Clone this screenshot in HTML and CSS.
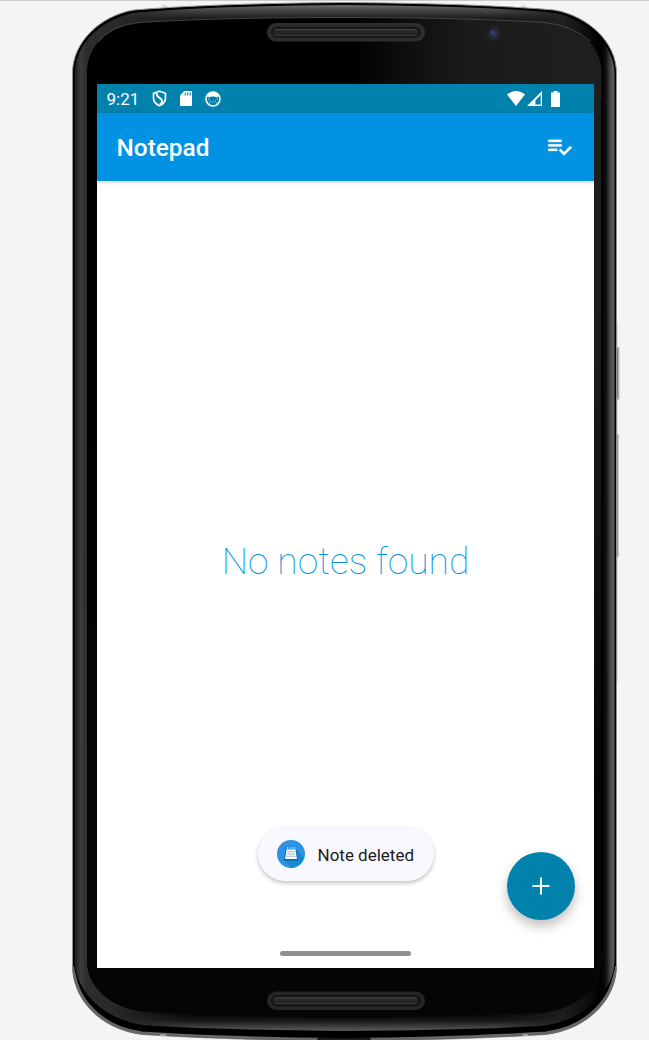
FILE: index.html
```html
<!DOCTYPE html>
<html lang="en">
<head>
<meta charset="utf-8">
<title>Notepad</title>
<link rel="stylesheet" href="styles.css">
</head>
<body>
<main class="stage">
  <svg class="device" viewBox="0 0 649 1040" aria-hidden="true">
    <defs>
      <linearGradient id="side" gradientUnits="userSpaceOnUse" x1="72" y1="0" x2="617" y2="0">
        <stop offset="0" stop-color="#111"/><stop offset=".007" stop-color="#222"/><stop offset=".016" stop-color="#3c3c3c"/><stop offset=".027" stop-color="#2c2c2c"/>
        <stop offset=".1" stop-color="#2a2a2a"/><stop offset=".9" stop-color="#222"/>
        <stop offset=".972" stop-color="#000"/><stop offset=".98" stop-color="#111"/><stop offset=".988" stop-color="#484848"/><stop offset=".995" stop-color="#606060"/>
      </linearGradient>
      <linearGradient id="topEdge" gradientUnits="userSpaceOnUse" x1="0" y1="4" x2="0" y2="19">
        <stop offset="0" stop-color="#707070"/><stop offset=".45" stop-color="#444"/><stop offset="1" stop-color="#191919"/>
      </linearGradient>
      <linearGradient id="bottomEdge" gradientUnits="userSpaceOnUse" x1="0" y1="1014" x2="0" y2="1030">
        <stop offset="0" stop-color="#060606"/><stop offset=".4" stop-color="#161616"/><stop offset="1" stop-color="#555"/>
      </linearGradient>
      <linearGradient id="fadeX" x1="0" x2="1" y1="0" y2="0">
        <stop offset=".07" stop-color="#000"/><stop offset=".22" stop-color="#fff"/><stop offset=".78" stop-color="#fff"/><stop offset=".93" stop-color="#000"/>
      </linearGradient>
      <mask id="middle"><rect x="72" width="545" height="1040" fill="url(#fadeX)"/></mask>
      <linearGradient id="glass" gradientUnits="userSpaceOnUse" x1="350" y1="0" x2="560" y2="0">
        <stop offset="0" stop-color="#1d1d1d" stop-opacity="0"/><stop offset=".55" stop-color="#1a1a1a"/><stop offset="1" stop-color="#1e1e1e"/>
      </linearGradient>
      <linearGradient id="glassFade" gradientUnits="userSpaceOnUse" x1="0" y1="300" x2="0" y2="1000">
        <stop offset="0" stop-color="#050505" stop-opacity="0"/><stop offset=".7" stop-color="#050505"/>
      </linearGradient>
      <linearGradient id="bar" x1="0" x2="0" y1="0" y2="1">
        <stop offset="0" stop-color="#555"/><stop offset=".2" stop-color="#292929"/><stop offset=".75" stop-color="#222"/><stop offset="1" stop-color="#444"/>
      </linearGradient>
      <radialGradient id="lens"><stop offset="0" stop-color="#343c60"/><stop offset=".5" stop-color="#25293e"/><stop offset=".75" stop-color="#202024"/><stop offset="1" stop-color="#1d1d1d"/></radialGradient>
      <path id="shell" d="M72.500 73C72.500 43 99 16 134 10Q210 3.500 344 2.500Q478 3.500 554 10C589 16 616.500 43 616.500 73V966C616.500 998 589 1029 546 1034.500Q460 1040 344 1041Q228 1040 142 1034.500C99 1029 72.500 998 72.500 966Z"/>
      <path id="body" d="M74 74C74 45 100 19 134 12.500Q210 6 344 5Q478 6 554 12.500C588 19 615 45 615 74V960C615 991 586 1021 543 1026Q460 1030 344 1031Q228 1030 145 1025.500C102 1021 74 989 74 960Z"/>
      <path id="face" d="M87 72C87 46 108 25 140 22.500Q220 17.500 344 17.500Q468 17.500 544 22.500C578 25 601.500 46 601.500 72V959C601.500 988 576 1010 540 1013Q450 1017 344 1018Q238 1017 147 1012C111 1009 87 987 87 961Z"/>
      <clipPath id="inShell"><use href="#shell"/></clipPath>
    </defs>
    <rect width="649" height="1" fill="#cacaca"/>
    <rect x="616" y="322" width="1.500" height="360" fill="#c4c4c4"/>
    <rect x="615" y="347" width="4.500" height="53" rx="1" fill="#b5b5b5"/><rect x="615" y="348" width="3" height="50" fill="#777"/>
    <rect x="615" y="434" width="3.500" height="123" rx="1" fill="#999"/><rect x="615" y="436" width="2" height="119" fill="#686868"/>
    <use href="#shell" fill="#000" stroke="#939393"/>
    <g clip-path="url(#inShell)">
      <path d="M72.500 966C72.500 998 99 1029 142 1034.500Q228 1040 344 1041Q460 1040 546 1034.500C589 1029 616.500 998 616.500 966" fill="none" stroke="#666" stroke-width="6"/>
    </g>
    <use href="#body" fill="url(#side)" stroke="#000"/>
    <g mask="url(#middle)">
      <path d="M74 74C74 45 100 19 134 12.500Q210 6 344 5Q478 6 554 12.500C588 19 615 45 615 74Z" fill="url(#topEdge)"/>
      <path d="M74 960C74 989 102 1021 145 1025.500Q228 1030 344 1031Q460 1030 543 1026C586 1021 615 991 615 960Z" fill="url(#bottomEdge)"/>
    </g>
    <use href="#face" fill="#000"/>
    <use href="#face" fill="url(#glass)"/>
    <use href="#face" fill="url(#glassFade)"/>
    <path d="M602 100V950" stroke="#000" stroke-width="2" opacity=".8"/>
    <path d="M98 42Q112 25 140 22.500Q220 17.500 344 17.500Q468 17.500 544 22.500Q572 25 590 41" fill="none" stroke="#777" stroke-width=".7" opacity=".7"/>
    <path d="M162 6h5M521 6h5M160 1035h6M523 1035h5" stroke="#ccc" stroke-width="2" opacity=".6"/>
    <g>
      <rect x="267" y="23" width="158" height="18.500" rx="9.250" fill="#2e2e2e"/>
      <rect x="271" y="26.500" width="150" height="11.500" rx="5.750" fill="#181818"/>
      <rect x="273" y="29" width="145" height="7" rx="3.500" fill="url(#bar)"/>
      <rect x="267" y="991.500" width="158" height="18.500" rx="9.250" fill="#252525"/>
      <rect x="271" y="995" width="150" height="11.500" rx="5.750" fill="#141414"/>
      <rect x="273" y="997.500" width="145" height="6.500" rx="3" fill="url(#bar)"/>
    </g>
    <circle cx="494" cy="33.500" r="8.500" fill="url(#lens)"/><circle cx="492" cy="32" r=".8" fill="#6674a5"/>
    <path d="M318 1040v-1q0-1 2-1h48q2 0 2 1v1" fill="#222" stroke="#000"/>
  </svg>

  <section class="screen">
    <header class="status">
      <span class="clock">9:21</span>
      <svg class="shield" viewBox="0 0 15 17"><path d="M7.500 1.200 13.500 3.300V8Q13.500 13 7.500 15.800Q1.500 13 1.500 8V3.300Z" fill="none" stroke="#fff" stroke-width="1.700"/><path d="M5 3Q4 5 6.500 7L9 9Q11.500 11.500 8 14.500" fill="none" stroke="#fff" stroke-width="1.900"/></svg>
      <svg class="card" viewBox="0 0 12 15"><path d="M4.300 0H11Q12 0 12 1V14Q12 15 11 15H1Q0 15 0 14V4.500Z" fill="#fff"/><path d="M5.200 1.500V4.500M7.700 1.500V4.500M10.200 1.500V4.500" stroke="#0082ad" stroke-width="1.100"/></svg>
      <svg class="cat" viewBox="0 0 16 16"><circle cx="8" cy="8" r="7" fill="none" stroke="#fff" stroke-width="1.500"/><path d="M1.500 6V4L3 3Q5 1 8 1Q11 1 13 3L14.500 4V6L13 5.500 11.500 6.500Q10 5 8 5.500Q6 5 4.500 6.500L3 5.500Z" fill="#fff"/><path d="M3 8h1M12 8h1M5 10h1M10 10h1M7.500 11h1M4 12h1M11 12h1" stroke="#fff" stroke-width=".9" opacity=".85"/></svg>
      <span class="spacer"></span>
      <svg class="wifi" viewBox="0 0 18 15"><path d="M0 3.500Q4 0 9 0Q14 0 18 3.500L9 15Z" fill="#fff"/></svg>
      <svg class="signal" viewBox="0 0 15 15"><path d="M15 0V15H0Z" fill="#fff"/><path d="M13.700 4V13.700H8V9.700Z" fill="#0082ad"/><path d="M8.500 9.500V13.700H13" fill="none" stroke="#fff" stroke-width="1" opacity=".4"/></svg>
      <svg class="battery" viewBox="0 0 9 16"><path d="M2.500 0h4v1.500H9V16H0V1.500h2.500Z" fill="#fff"/></svg>
    </header>
    <div class="appbar">
      <h1 class="title">Notepad</h1>
      <svg class="select" viewBox="0 0 24 24"><path fill="#fff" d="M14 10H2v2h12zm0-4H2v2h12zM2 16h8v-2H2zm19.500-4.500L23 13l-6.990 7-4.510-4.500L13 14l3.010 3z" stroke="#fff" stroke-width=".25"/></svg>
    </div>
    <div class="content">
      <p class="empty">No notes found</p>
      <div class="toast">
        <svg class="logo" viewBox="0 0 28 28"><circle cx="14" cy="14" r="14" fill="#2d93e6"/><path d="M20 10 27 17Q24 27 14 28L8 20Z" fill="#178bd2"/><path d="M8.500 9.500H19.500L21.300 20.800H6.700Z" fill="#096c9e"/><path d="M9.500 9.500H18.500L20 19H8Z" fill="#f5fbff"/><path d="M10.500 11.700H17.700M10 14H18M9.500 16.300H18.500" stroke="#8baebf" stroke-width=".8"/><path d="M10.500 7V10M13 7V10M15.500 7V10M18 7V10" stroke="#72dcff"/></svg>
        <span class="message">Note deleted</span>
      </div>
      <button class="fab" aria-label="Add note"><svg viewBox="0 0 18 18"><path d="M9 .500V17.500M.500 9H17.500" stroke="#fff" stroke-width="2"/></svg></button>
      <div class="home"></div>
    </div>
  </section>
</main>
</body>
</html>
```
FILE: styles.css
```css
* { box-sizing: border-box; }
body { margin: 0; background: #f4f4f4; font-family: Roboto, sans-serif; overflow: hidden; }
svg { display: block; flex: none; }
.stage { position: relative; width: 649px; height: 1040px; padding: 84px 55px 72px 97px; }
.device { position: absolute; inset: 0; width: 649px; height: 1040px; }
.screen { position: relative; display: flex; flex-direction: column; width: 497px; height: 884px; background: #fff; overflow: hidden; }
.status { display: flex; align-items: center; height: 29px; padding: 0 34px 0 9.5px; background: #0082ad; color: #fff; }
.clock { width: 45.5px; font-size: 17px; line-height: 29px; padding-top: 2px; }
.shield { width: 15px; height: 17px; margin-right: 13px; }
.card { width: 12px; height: 15px; margin-right: 12.5px; }
.cat { width: 16px; height: 16px; }
.spacer { flex: 1; }
.wifi { width: 18px; height: 15px; margin-right: 2px; }
.signal { width: 15px; height: 15px; margin-right: 9px; }
.battery { width: 9px; height: 16px; }
.appbar { display: flex; align-items: center; justify-content: space-between; height: 68px; padding: 0 21px 0 19.5px; background: #0292e3; color: #fff; box-shadow: 0 1px 4px rgba(0,0,0,.2); z-index: 1; }
.title { margin: 2px 0 0; font-size: 24.4px; font-weight: 500; line-height: 30px; }
.select { width: 27px; height: 27px; margin-bottom: 2px; }
.content { position: relative; flex: 1; display: flex; flex-direction: column; align-items: center; }
.empty { margin: 357px 0 0; font-size: 37.2px; line-height: 46px; font-weight: 100; color: #0292e3; white-space: nowrap; }
.toast { display: flex; align-items: center; gap: 13px; width: 176px; height: 54px; margin-top: 243px; padding-left: 19px; border-radius: 27px; background: #f9f8fe; color: #1c1b20; font-size: 17px; white-space: nowrap; box-shadow: 0 2px 4px rgba(0,0,0,.25); }
.message { padding-top: 2px; }
.logo { width: 28px; height: 28px; }
.fab { position: absolute; right: 19px; bottom: 48px; width: 68px; height: 68px; display: grid; place-items: center; padding: 0; border: 0; border-radius: 50%; background: #0082ad; box-shadow: 0 6px 12px rgba(0,0,0,.26); }
.fab svg { width: 18px; height: 18px; }
.home { width: 131px; height: 5px; margin-top: 70px; border-radius: 3px; background: #8f8f8f; }
```
